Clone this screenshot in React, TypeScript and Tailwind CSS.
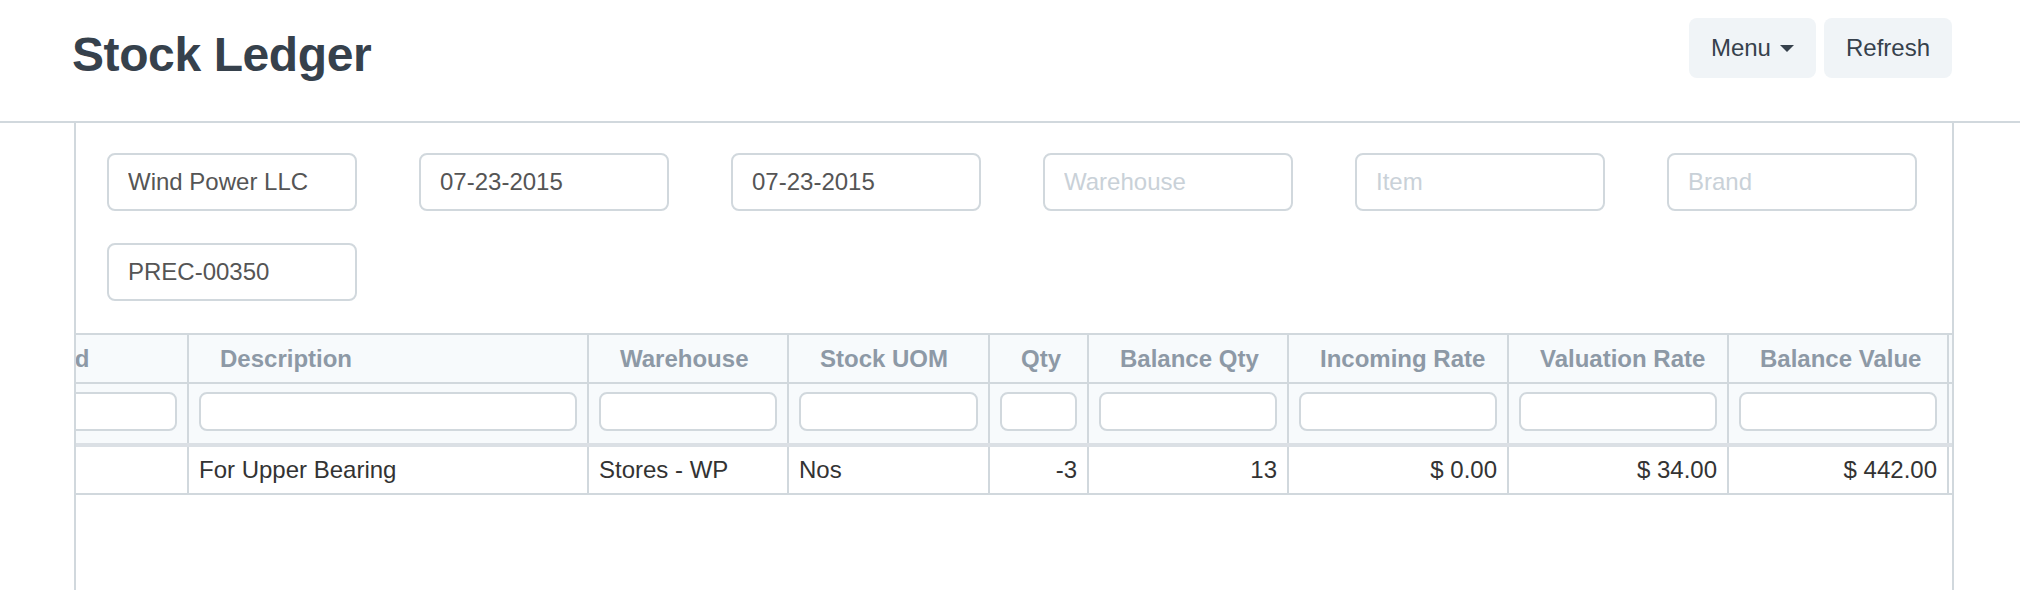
const columns = [
  { label: "Brand", width: "w-[200px]", value: "", right: false },
  { label: "Description", width: "w-[400px]", value: "For Upper Bearing", right: false },
  { label: "Warehouse", width: "w-[200px]", value: "Stores - WP", right: false },
  { label: "Stock UOM", width: "w-[201px]", value: "Nos", right: false },
  { label: "Qty", width: "w-[99px]", value: "-3", right: true },
  { label: "Balance Qty", width: "w-[200px]", value: "13", right: true },
  { label: "Incoming Rate", width: "w-[220px]", value: "$ 0.00", right: true },
  { label: "Valuation Rate", width: "w-[220px]", value: "$ 34.00", right: true },
  { label: "Balance Value", width: "w-[220px]", value: "$ 442.00", right: true },
  { label: "Voucher Type", width: "w-[200px]", value: "Purchase Receipt", right: false },
];

const filters = [
  { value: "Wind Power LLC", placeholder: "Company" },
  { value: "07-23-2015", placeholder: "From Date" },
  { value: "07-23-2015", placeholder: "To Date" },
  { value: "", placeholder: "Warehouse" },
  { value: "", placeholder: "Item" },
  { value: "", placeholder: "Brand" },
  { value: "PREC-00350", placeholder: "Voucher #" },
];

export default function App() {
  return (
    <div className="w-[2020px] h-[590px] overflow-hidden bg-white font-['Liberation_Sans',Arial,sans-serif] text-[#36414c]">
      {/* page head */}
      <div className="h-[123px] border-b-2 border-[#d1d8dd] flex items-start justify-between pl-[72px] pr-[68px] pt-[18px]">
        <h1 className="mt-[13px] text-[48px] leading-none font-bold tracking-[-0.4px]">
          Stock Ledger
        </h1>
        <div className="flex gap-[8px]">
          <button className="h-[60px] px-[22px] rounded-[8px] bg-[#f0f4f7] text-[24px] flex items-center gap-[9px]">
            Menu
            <span className="w-0 h-0 border-x-[7px] border-t-[7px] border-x-transparent border-t-[#36414c]" />
          </button>
          <button className="h-[60px] px-[22px] rounded-[8px] bg-[#f0f4f7] text-[24px]">
            Refresh
          </button>
        </div>
      </div>

      {/* body */}
      <div className="ml-[74px] w-[1880px] h-[467px] border-x-2 border-[#d1d8dd] overflow-hidden">
        <div className="grid grid-cols-[repeat(6,312px)] gap-y-[32px] pl-[31px] pt-[30px]">
          {filters.map((f, idx) => (
            <input
              key={idx}
              readOnly
              defaultValue={f.value}
              placeholder={f.placeholder}
              className="w-[250px] h-[58px] border-2 border-[#d1d8dd] rounded-[8px] px-[19px] text-[24px] text-[#555] placeholder:text-[#c9d1d8] outline-none"
            />
          ))}
        </div>

        {/* grid */}
        <div className="mt-[32px] ml-[-87px] w-max border-t-2 border-[#d1d8dd]">
          <div className="flex h-[49px] bg-[#f7fafc] border-b-2 border-[#d1d8dd]">
            {columns.map((c) => (
              <div
                key={c.label}
                className={`${c.width} shrink-0 border-r-2 border-[#d1d8dd] pl-[31px] flex items-center text-[24px] font-bold text-[#8d99a6] whitespace-nowrap`}
              >
                {c.label}
              </div>
            ))}
          </div>
          <div className="flex h-[63px] bg-[#f7fafc] border-b-4 border-[#dbe0e5]">
            {columns.map((c) => (
              <div
                key={c.label}
                className={`${c.width} shrink-0 border-r-2 border-[#d1d8dd] px-[10px] pt-[8px]`}
              >
                <div className="h-[39px] bg-white border-2 border-[#d1d8dd] rounded-[8px]" />
              </div>
            ))}
          </div>
          <div className="flex h-[48px] border-b-2 border-[#d1d8dd]">
            {columns.map((c) => (
              <div
                key={c.label}
                className={`${c.width} shrink-0 border-r-2 border-[#d1d8dd] px-[10px] flex items-center text-[24px] text-[#333] whitespace-nowrap overflow-hidden ${
                  c.right ? "justify-end" : "justify-start"
                }`}
              >
                {c.value}
              </div>
            ))}
          </div>
        </div>
      </div>
    </div>
  );
}
